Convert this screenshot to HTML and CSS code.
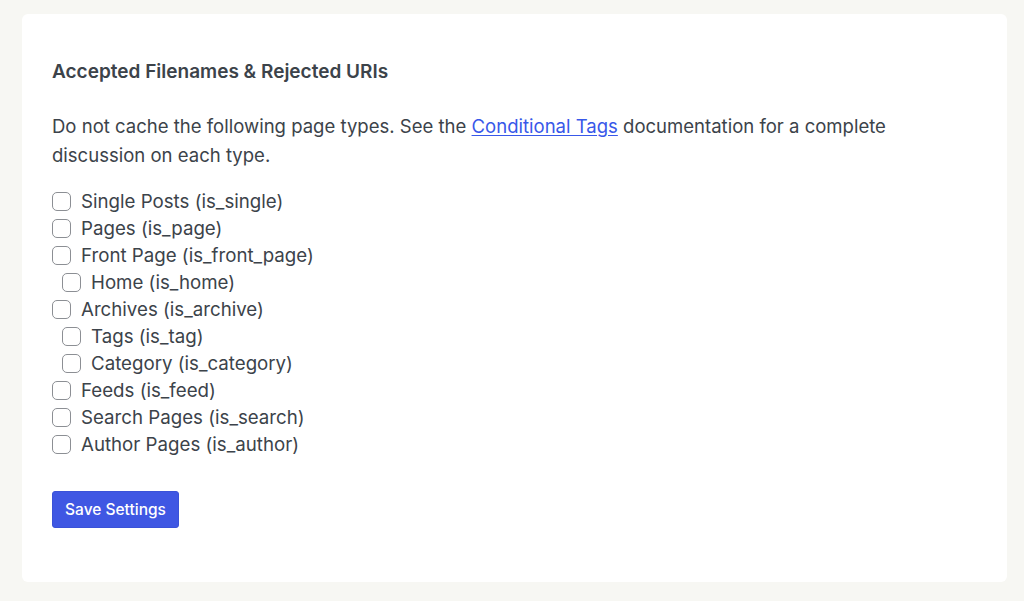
FILE: index.html
```html
<!DOCTYPE html>
<html lang="en">
<head>
<meta charset="utf-8">
<link rel="stylesheet" href="styles.css">
</head>
<body>
<main class="card">
  <h2 class="title">Accepted Filenames &amp; Rejected URIs</h2>
  <p class="desc">Do not cache the following page types. See the <a href="#">Conditional Tags</a> documentation for a complete discussion on each type.</p>
  <ul class="list">
    <li><label><input type="checkbox"><span>Single Posts (is_single)</span></label></li>
    <li><label><input type="checkbox"><span>Pages (is_page)</span></label></li>
    <li><label><input type="checkbox"><span>Front Page (is_front_page)</span></label></li>
    <li class="sub"><label><input type="checkbox"><span>Home (is_home)</span></label></li>
    <li><label><input type="checkbox"><span>Archives (is_archive)</span></label></li>
    <li class="sub"><label><input type="checkbox"><span>Tags (is_tag)</span></label></li>
    <li class="sub"><label><input type="checkbox"><span>Category (is_category)</span></label></li>
    <li><label><input type="checkbox"><span>Feeds (is_feed)</span></label></li>
    <li><label><input type="checkbox"><span>Search Pages (is_search)</span></label></li>
    <li><label><input type="checkbox"><span>Author Pages (is_author)</span></label></li>
  </ul>
  <button class="btn" type="button">Save Settings</button>
</main>
</body>
</html>
```
FILE: styles.css
```css
html, body {
  margin: 0;
  padding: 0;
  background: #f7f7f3;
}
body {
  padding: 14px 17px 19px 22px;
  font-family: Inter, "Noto Sans", sans-serif;
  color: #3c434a;
}
.card {
  background: #fff;
  border-radius: 6px;
  height: 568px;
  box-sizing: border-box;
  padding: 46px 30px 0 30px;
}
.title {
  margin: 0;
  font-size: 19px;
  font-weight: 600;
  line-height: 24px;
  color: #3c434a;
}
.desc {
  margin: 28px 0 0 0;
  font-size: 18.55px;
  line-height: 29px;
  max-width: 870px;
}
.desc a {
  color: #3858e9;
  text-decoration: underline;
  text-underline-offset: 2px;
}
.list {
  list-style: none;
  margin: 18px 0 0 0;
  padding: 0;
}
.list li {
  height: 27px;
  display: flex;
  align-items: center;
}
.list li.sub {
  padding-left: 10px;
}
.list label {
  display: flex;
  align-items: center;
  gap: 10px;
  font-size: 18.7px;
}
.list input {
  appearance: none;
  -webkit-appearance: none;
  margin: 0;
  width: 19px;
  height: 19px;
  border: 1px solid #8c8f94;
  border-radius: 5px;
  background: #fff;
  box-sizing: border-box;
}
.btn {
  display: block;
  margin-top: 33px;
  height: 37px;
  padding: 0;
  background: #3f57e3;
  color: #fff;
  border: 1px solid #3a52d8;
  border-radius: 3px;
  font-family: Inter, "Noto Sans", sans-serif;
  font-size: 15.5px;
  font-weight: 500;
  width: 127px;
}
```
